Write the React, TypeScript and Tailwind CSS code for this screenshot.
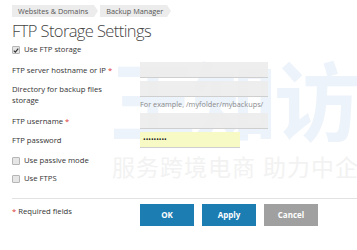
import React from "react";

const font = { fontFamily: '"Open Sans", "Noto Sans CJK SC", sans-serif' };

const Field: React.FC<{ label: React.ReactNode; children: React.ReactNode }> = ({ label, children }) => (
    <div className="flex items-start">
        <div className="w-[128px] shrink-0 pt-[3px] leading-[11px]">{label}</div>
        {children}
    </div>
);

const Box: React.FC<{ checked?: boolean }> = ({ checked }) => (
    <span className="w-[8px] h-[8px] border border-[#b5b5b5] bg-[#e6e6e6] rounded-[1px] flex items-center justify-center">
        {checked && (
            <svg width="7" height="7" viewBox="0 0 8 8">
                <path d="M1 4.2 L3.1 6.3 L7 1.5" stroke="#333" strokeWidth="1.6" fill="none" />
            </svg>
        )}
    </span>
);

const Req = () => <span className="text-[#d33]"> *</span>;

export default function App() {
    return (
        <div className="relative w-[357px] h-[250px] bg-white overflow-hidden text-[7.7px] text-[#333]" style={font}>
            {/* watermark */}
            <div className="absolute left-[110px] top-[52px] whitespace-nowrap text-[86px] leading-[100px] font-bold text-[#edf3fa] tracking-[-4px] pointer-events-none">
                王知访越
            </div>
            <div className="absolute left-[112px] top-[152px] whitespace-nowrap text-[23px] leading-[30px] text-[#f2f2f2] tracking-[1px] pointer-events-none">
                服务跨境电商 助力中企
            </div>

            <div className="relative px-[12px] pt-[5px]">
                <div className="flex h-[12px] items-center text-[7.3px] text-[#555]">
                    <span className="bg-[#ececec] h-full flex items-center pl-[6px] pr-[6px]">Websites &amp; Domains</span>
                    <span className="w-0 h-0 border-y-[6px] border-y-transparent border-l-[4px] border-l-[#ececec]" />
                    <span className="bg-[#ececec] h-full flex items-center pl-[6px] pr-[4px] ml-[2px]">Backup Manager</span>
                    <span className="w-0 h-0 border-y-[6px] border-y-transparent border-l-[4px] border-l-[#ececec]" />
                </div>
                <h1 className="text-[16.5px] leading-[22px] mt-[3px] text-[#444] font-light tracking-[-0.6px]">FTP Storage Settings</h1>

                <div className="flex items-center gap-[4px] mt-[2px] h-[12px]">
                    <Box checked />
                    <span>Use FTP storage</span>
                </div>

                <div className="flex flex-col gap-[3px] mt-[6px]">
                    <Field label={<>FTP server hostname or IP<Req /></>}>
                        <div className="w-[128px] h-[16px] bg-[#ececec]/90 border-b border-[#cfcfcf]" />
                    </Field>
                    <Field label={<>Directory for backup files<br />storage</>}>
                        <div>
                            <div className="w-[128px] h-[16px] bg-[#ececec]/90 border-b border-[#cfcfcf]" />
                            <div className="text-[#8a8a8a] mt-[2px] leading-[11px] text-[7.3px] whitespace-nowrap">For example, /myfolder/mybackups/</div>
                        </div>
                    </Field>
                    <Field label={<>FTP username<Req /></>}>
                        <div className="w-[128px] h-[16px] bg-[#ececec]/90 border-b border-[#cfcfcf]" />
                    </Field>
                    <Field label="FTP password">
                        <div className="w-[100px] h-[16px] bg-[#f7fac4] border-b border-[#cfcfcf] flex items-center pl-[3px] text-[#222] text-[7px] leading-[8px]">
                            •••••••••
                        </div>
                    </Field>
                </div>

                <div className="flex items-center gap-[4px] mt-[7px] h-[12px]">
                    <Box />
                    <span>Use passive mode</span>
                </div>
                <div className="flex items-center gap-[4px] mt-[6px] h-[12px]">
                    <Box />
                    <span>Use FTPS</span>
                </div>

                <div className="mt-[13px] border-t border-[#e2e2e2] mr-[-12px]" />

                <div className="flex items-start mt-[5px]">
                    <div className="w-[128px] pt-[2px]"><span className="text-[#d33]">*</span> Required fields</div>
                    <div className="flex gap-[8px] text-white font-bold text-[8px]">
                        <button className="w-[54px] h-[22px] bg-[#1c7db2]">OK</button>
                        <button className="w-[54px] h-[22px] bg-[#1c7db2]">Apply</button>
                        <button className="w-[54px] h-[22px] bg-[#a0a0a0]">Cancel</button>
                    </div>
                </div>
            </div>
        </div>
    );
}
